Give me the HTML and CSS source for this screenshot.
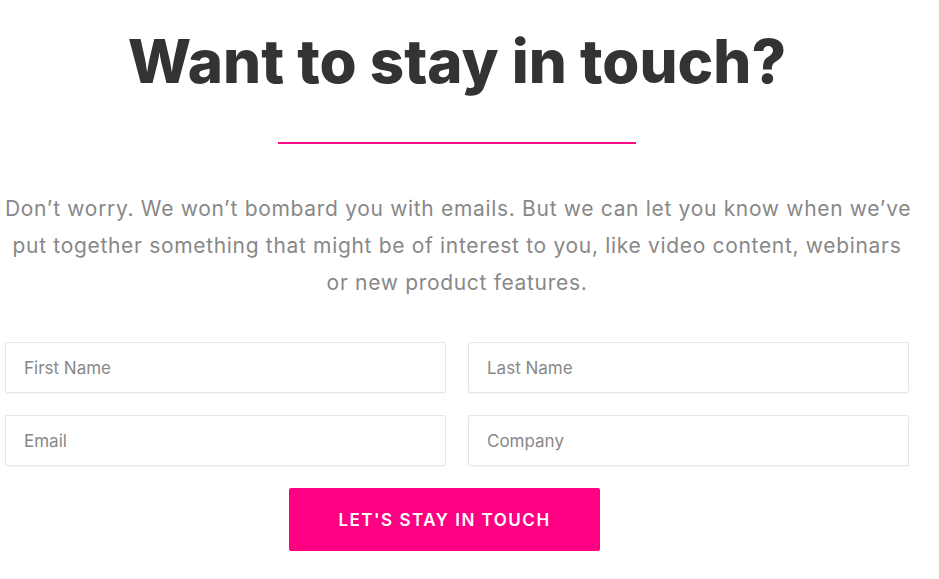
FILE: index.html
```html
<!DOCTYPE html>
<html lang="en">
<head>
    <meta charset="UTF-8">
    <meta name="viewport" content="width=device-width, initial-scale=1.0">
    <title>Want to stay in touch?</title>
    <link rel="stylesheet" href="styles.css">
</head>
<body>
    <section class="touch">
        <h1 class="touch-title">Want to stay in touch?</h1>
        <div class="touch-divider"></div>
        <p class="touch-text">Don’t worry. We won’t bombard you with emails. But we can let you know when we’ve<br>
            put together something that might be of interest to you, like video content, webinars<br>
            or new product features.</p>

        <form class="touch-form">
            <div class="touch-fields">
                <input type="text" placeholder="First Name">
                <input type="text" placeholder="Last Name">
                <input type="email" placeholder="Email">
                <input type="text" placeholder="Company">
            </div>
            <button type="submit" class="touch-button">Let's stay in touch</button>
        </form>
    </section>
</body>
</html>
```

FILE: styles.css
```css
body {
    margin: 0;
    background: #fff;
    font-family: Inter, "Open Sans", sans-serif;
}

.touch {
    width: 904px;
    margin-left: 5px;
    text-align: center;
}

.touch-title {
    margin: 25px 0 0;
    font-size: 60px;
    line-height: 72px;
    font-weight: 800;
    color: #333;
}

.touch-divider {
    width: 358px;
    height: 2px;
    margin: 45px auto 0;
    background-color: #fe0a86;
}

.touch-text {
    margin: 46px 0 0;
    font-size: 21px;
    line-height: 37px;
    letter-spacing: 0.68px;
    color: #888;
    white-space: nowrap;
}

.touch-form {
    margin-top: 41px;
}

.touch-fields {
    display: grid;
    grid-template-columns: 1fr 1fr;
    gap: 22px;
}

.touch-fields input {
    height: 51px;
    box-sizing: border-box;
    padding: 0 18px;
    border: 1px solid #e6e6e6;
    border-radius: 2px;
    box-shadow: 0 1px 2px rgba(0,0,0,0.04);
    font-family: inherit;
    font-size: 17px;
    color: #555;
    outline: none;
}

.touch-fields input::placeholder {
    color: #888;
}

.touch-button {
    display: block;
    width: 311px;
    height: 63px;
    margin: 22px 0 0 284px;
    border: none;
    border-radius: 2px;
    background-color: #ff0083;
    color: #fff;
    font-family: inherit;
    font-size: 17px;
    font-weight: 600;
    letter-spacing: 1.5px;
    text-transform: uppercase;
    cursor: pointer;
}
```
